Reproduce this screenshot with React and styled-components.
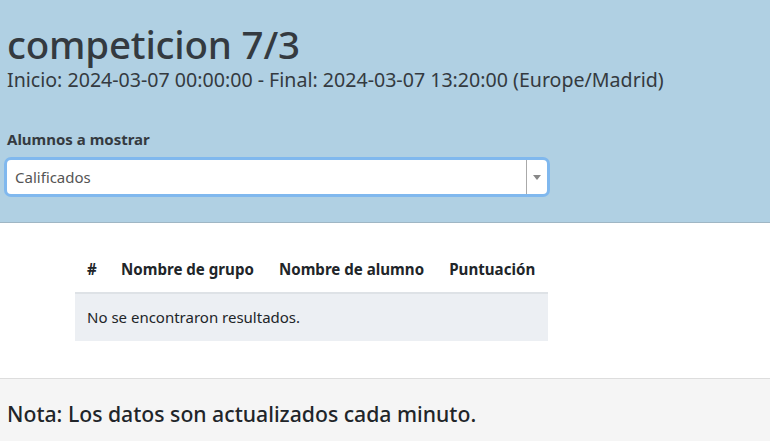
import React from 'react'
import styled, { createGlobalStyle } from 'styled-components'

const GlobalStyle = createGlobalStyle`
  html, body {
    margin: 0;
    padding: 0;
    background: #ffffff;
    font-family: "Noto Sans", "Open Sans", sans-serif;
    color: #212529;
  }
`

const Header = styled.header`
  background: #b0d0e3;
  border-bottom: 1px solid #9fb6c4;
  padding: 20px 7px 28px;
  color: #343a40;
`

const Title = styled.h1`
  margin: 0;
  font-size: 38.5px;
  font-weight: 500;
  line-height: 48px;
  letter-spacing: -0.2px;
`

const Subtitle = styled.h5`
  margin: 0;
  font-size: 19.6px;
  font-weight: 400;
  line-height: 24px;
`

const Label = styled.label`
  display: block;
  margin-top: 36px;
  font-size: 15px;
  font-weight: 700;
  line-height: 22px;
`

const SelectBox = styled.div`
  margin-top: 10px;
  width: 540px;
  height: 34px;
  box-sizing: border-box;
  display: flex;
  align-items: center;
  background: #ffffff;
  border-radius: 4px;
  box-shadow: 0 0 0 3px #80b8ee;
`

const SelectValue = styled.span`
  flex: 1;
  padding-left: 8px;
  font-size: 15px;
  color: #555555;
`

const Caret = styled.span`
  width: 20px;
  height: 100%;
  border-left: 1px solid #aaaaaa;
  display: flex;
  align-items: center;
  justify-content: center;
  &::after {
    content: '';
    border-left: 4px solid transparent;
    border-right: 4px solid transparent;
    border-top: 5px solid #888888;
  }
`

const Main = styled.main`
  padding: 23px 0 37px 75px;
`

const Table = styled.table`
  width: 473px;
  border-collapse: collapse;
  font-size: 15px;
`

const Th = styled.th`
  text-align: left;
  padding: 12px 12px;
  line-height: 22px;
  font-size: 15.1px;
  font-weight: 700;
  border-bottom: 2px solid #dee2e6;
  white-space: nowrap;
`

const Td = styled.td`
  background: #eceff3;
  padding: 13px 12px;
  line-height: 21px;
`

const Footer = styled.footer`
  background: #f5f5f5;
  border-top: 1px solid #dddddd;
  padding: 21px 7px 30px;
`

const Note = styled.h4`
  margin: 0;
  font-size: 21.2px;
  font-weight: 500;
  line-height: 28px;
  color: #212529;
`

export default function App() {
  return (
    <>
      <GlobalStyle />
      <Header>
        <Title>competicion 7/3</Title>
        <Subtitle>Inicio: 2024-03-07 00:00:00 - Final: 2024-03-07 13:20:00 (Europe/Madrid)</Subtitle>
        <Label>Alumnos a mostrar</Label>
        <SelectBox>
          <SelectValue>Calificados</SelectValue>
          <Caret />
        </SelectBox>
      </Header>
      <Main>
        <Table>
          <thead>
            <tr>
              <Th>#</Th>
              <Th>Nombre de grupo</Th>
              <Th>Nombre de alumno</Th>
              <Th>Puntuación</Th>
            </tr>
          </thead>
          <tbody>
            <tr>
              <Td colSpan={4}>No se encontraron resultados.</Td>
            </tr>
          </tbody>
        </Table>
      </Main>
      <Footer>
        <Note>Nota: Los datos son actualizados cada minuto.</Note>
      </Footer>
    </>
  )
}
